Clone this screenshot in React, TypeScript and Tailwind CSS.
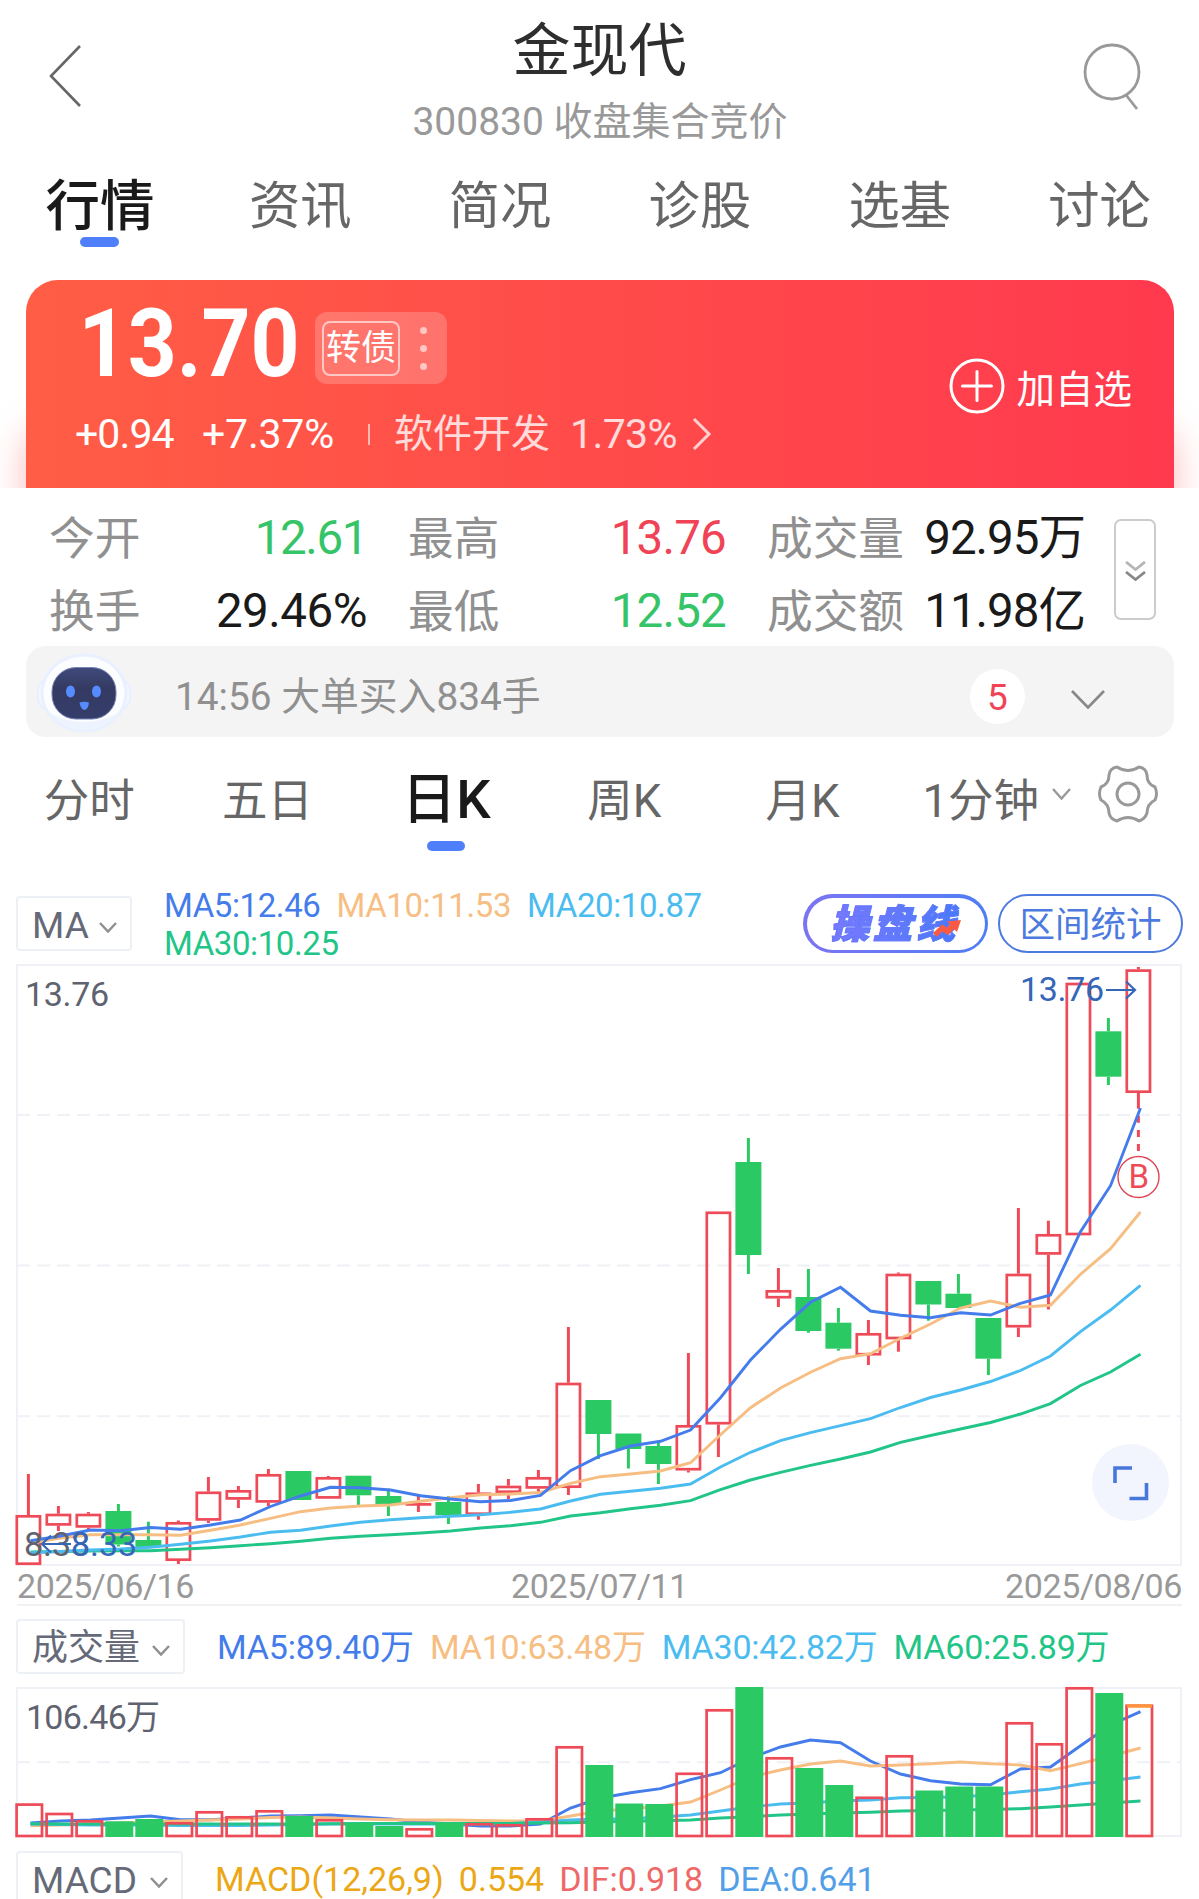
import { clsx } from "clsx";

type Tone = "up" | "down";

type Candle = {
  tone: Tone;
  top: number;
  bottom: number;
  high?: number;
  low?: number;
};

type Series = { color: string; points: number[] };

const UP = "#ee4a58";
const DOWN = "#2bc964";
const STEP = 30;

const tabs = ["行情", "资讯", "简况", "诊股", "选基", "讨论"];
const periods = ["分时", "五日", "日K", "周K", "月K", "1分钟"];

const stats = [
  { label: "今开", value: "12.61", className: "text-[#35c468] tracking-[-1.4px]" },
  { label: "最高", value: "13.76", className: "text-[#f04356] tracking-[-0.8px]" },
  { label: "成交量", value: "92.95万", className: "text-[#1a1a1a] tracking-[-1px]" },
  { label: "换手", value: "29.46%", className: "text-[#1a1a1a] tracking-[-0.5px]" },
  { label: "最低", value: "12.52", className: "text-[#35c468] tracking-[-0.8px]" },
  { label: "成交额", value: "11.98亿", className: "text-[#1a1a1a] tracking-[-1px]" },
];

const candles: Candle[] = [
  { tone: "up", top: 1515, bottom: 1565, high: 1474 },
  { tone: "up", top: 1513.7, bottom: 1525.7, high: 1506, low: 1531 },
  { tone: "up", top: 1513.7, bottom: 1527.7, high: 1512, low: 1530 },
  { tone: "down", top: 1511, bottom: 1544.5, high: 1504, low: 1546.5 },
  { tone: "down", top: 1540, bottom: 1547, high: 1521.7 },
  { tone: "up", top: 1522, bottom: 1561, high: 1520.5, low: 1564 },
  { tone: "up", top: 1491.5, bottom: 1520.7, high: 1477, low: 1523 },
  { tone: "up", top: 1490, bottom: 1499.7, high: 1486, low: 1508 },
  { tone: "up", top: 1474, bottom: 1502.7, high: 1469, low: 1506 },
  { tone: "down", top: 1471, bottom: 1500 },
  { tone: "up", top: 1477, bottom: 1498.7, high: 1476 },
  { tone: "down", top: 1475.7, bottom: 1495.3, low: 1505 },
  { tone: "down", top: 1496, bottom: 1504, high: 1488.7, low: 1516 },
  { tone: "up", top: 1503, bottom: 1505, high: 1496, low: 1512 },
  { tone: "down", top: 1502, bottom: 1515, high: 1496, low: 1524 },
  { tone: "up", top: 1492.5, bottom: 1515, high: 1484, low: 1519.7 },
  { tone: "up", top: 1485.7, bottom: 1493, high: 1479, low: 1499 },
  { tone: "up", top: 1477, bottom: 1488.7, high: 1470, low: 1493 },
  { tone: "up", top: 1382.7, bottom: 1488, high: 1327, low: 1495 },
  { tone: "down", top: 1400, bottom: 1434, low: 1459 },
  { tone: "down", top: 1433.5, bottom: 1449, low: 1468.5 },
  { tone: "down", top: 1446, bottom: 1464, high: 1441.7, low: 1484 },
  { tone: "up", top: 1425, bottom: 1470.5, high: 1353, low: 1472.5 },
  { tone: "up", top: 1211.5, bottom: 1424.5, low: 1457 },
  { tone: "down", top: 1162, bottom: 1255, high: 1138, low: 1274 },
  { tone: "up", top: 1290, bottom: 1298.5, high: 1268, low: 1307 },
  { tone: "down", top: 1297, bottom: 1331, high: 1269, low: 1332.7 },
  { tone: "down", top: 1322.7, bottom: 1348.7, high: 1308, low: 1350.7 },
  { tone: "up", top: 1333, bottom: 1355.5, high: 1320, low: 1365 },
  { tone: "up", top: 1273.7, bottom: 1339.3, high: 1272.5, low: 1351.7 },
  { tone: "down", top: 1281, bottom: 1304.5, low: 1320.7 },
  { tone: "down", top: 1293.7, bottom: 1308, high: 1274 },
  { tone: "down", top: 1318, bottom: 1358.7, low: 1375 },
  { tone: "up", top: 1273.7, bottom: 1327.5, high: 1208, low: 1337 },
  { tone: "up", top: 1234, bottom: 1254.7, high: 1220.7, low: 1309.5 },
  { tone: "up", top: 982.7, bottom: 1235.3 },
  { tone: "down", top: 1031.3, bottom: 1076.7, high: 1018, low: 1085 },
  { tone: "up", top: 969.3, bottom: 1093, high: 967, low: 1108.7 },
];

const priceSeries: Series[] = [
  {
    color: "#21c587",
    points: [
      1552, 1551.5, 1551, 1550.7, 1550.7, 1549.3, 1547.7, 1545.7, 1543.7, 1541.3, 1538.3, 1536.3, 1534.7, 1533, 1531, 1528, 1525.7, 1522.3, 1516,
      1512.7, 1508.7, 1505.3, 1500.7, 1489.7, 1480, 1472.3, 1465.3, 1459, 1452, 1442.3, 1435.5, 1429, 1422.5, 1414, 1403.6, 1385.5, 1372, 1354.3,
    ],
  },
  {
    color: "#4bbcf0",
    points: [
      1552.7, 1551.5, 1550, 1549, 1547.3, 1544.3, 1541, 1537, 1532.3, 1530.3, 1526, 1522.3, 1519.7, 1517.7, 1516.3, 1514.7, 1512.3, 1509, 1501,
      1494.3, 1491.3, 1488.3, 1484, 1467, 1452.3, 1440.7, 1432.7, 1425.7, 1418.7, 1407.5, 1397.5, 1390, 1381.5, 1370.5, 1356, 1331.7, 1310, 1285.3,
    ],
  },
  {
    color: "#f6be82",
    points: [
      1543, 1538, 1534.7, 1534.7, 1534.7, 1535.3, 1530.3, 1525, 1518.3, 1511.7, 1508, 1506, 1505, 1501.3, 1497.7, 1494.7, 1494, 1492.5, 1483.3,
      1476.7, 1474, 1471, 1462.7, 1434.7, 1407.7, 1388, 1372.3, 1358.7, 1353.7, 1338.3, 1324, 1308, 1301, 1307.3, 1305.3, 1274.3, 1248.7, 1212,
    ],
  },
  {
    color: "#447ceb",
    points: [
      1540.7, 1536, 1530, 1530.7, 1527.5, 1529.3, 1525, 1520, 1506.5, 1496, 1487.3, 1487.7, 1490, 1495.7, 1499, 1501.7, 1500.5, 1495.4, 1470.7,
      1455.7, 1446, 1441.3, 1430, 1397.7, 1360, 1329.3, 1302.3, 1287.3, 1311, 1315.2, 1317.7, 1312.7, 1315, 1303.3, 1295, 1231.7, 1185.7, 1108,
    ],
  },
];

const volumeTops = [
  1803.3, 1812.7, 1820, 1821.3, 1819, 1822, 1811, 1816, 1810, 1816, 1819, 1823, 1826, 1828, 1823, 1823, 1824, 1818, 1746, 1765, 1803.5, 1804,
  1772.5, 1709, 1687, 1757, 1768, 1785, 1796.5, 1755, 1790.5, 1786.5, 1786.5, 1722, 1743, 1687, 1693, 1704.5,
];

const volumeSeries: Series[] = [
  {
    color: "#447ceb",
    points: [
      1823, 1821, 1820, 1818, 1816, 1819.7, 1819.7, 1818, 1816, 1815.7, 1815, 1817, 1819, 1822, 1824, 1826, 1826, 1824, 1808, 1798, 1792.7, 1788.7,
      1779.7, 1772.7, 1758, 1747, 1740, 1742.7, 1761, 1774, 1780.7, 1784, 1784.7, 1769, 1767, 1745.7, 1725, 1711.7,
    ],
  },
  {
    color: "#f6be82",
    points: [
      1825.7, 1825, 1824, 1823, 1822, 1821, 1820, 1819, 1817.5, 1817, 1818, 1819, 1819.7, 1820, 1820, 1820.5, 1821, 1821, 1816, 1811, 1809, 1806,
      1802, 1790, 1777, 1770, 1764, 1761, 1766, 1765, 1763.7, 1762, 1763.7, 1765, 1770.7, 1763.7, 1756, 1748,
    ],
  },
  {
    color: "#4bbcf0",
    points: [
      1824, 1824.5, 1825, 1825, 1825, 1825.5, 1825.5, 1825.5, 1825, 1824.5, 1824, 1824, 1824, 1824, 1824, 1824, 1823.5, 1822, 1820, 1819, 1818.7,
      1817, 1815, 1811, 1807, 1804, 1802.7, 1801, 1800, 1797.7, 1797.5, 1796.7, 1795, 1791.7, 1789, 1784, 1780.7, 1777,
    ],
  },
  {
    color: "#21c587",
    points: [
      1823.7, 1824, 1824, 1824, 1824, 1824, 1824, 1824, 1824, 1824, 1823.7, 1823.5, 1823.5, 1823.5, 1823.5, 1823.5, 1823.5, 1823, 1822.7, 1822,
      1821.3, 1820.7, 1820, 1818, 1816.7, 1815, 1814, 1813, 1812.3, 1811, 1810.5, 1810, 1809.5, 1808.7, 1807, 1805, 1803, 1801,
    ],
  },
];

function Chevron({ className = "", width = 17, height = 10, stroke = 2.2 }: { className?: string; width?: number; height?: number; stroke?: number }) {
  return (
    <svg className={clsx("flex-none", className)} width={width} height={height} viewBox={`0 0 ${width} ${height}`} fill="none" stroke="currentColor" strokeWidth={stroke}>
      <path d={`M1 1L${width / 2} ${height - 1.5}L${width - 1} 1`} />
    </svg>
  );
}

function Header() {
  return (
    <header className="grid h-[160px] grid-cols-[1fr_auto_1fr] px-[48px]">
      <svg className="ml-[1px] mt-[45px]" width="34" height="62" viewBox="0 0 34 62" fill="none" stroke="#666" strokeWidth="2.6">
        <path d="M31 1L2 31L31 61" />
      </svg>
      <div className="flex flex-col items-center">
        <h1 className="mt-[16px] h-[70px] text-[58px] font-normal leading-[70px] text-[#2e2e2e]">金现代</h1>
        <p className="mt-[11px] h-[50px] pl-[1px] text-[39px] leading-[50px] text-[#999]">300830 收盘集合竞价</p>
      </div>
      <svg className="mr-[8px] mt-[42px] justify-self-end" width="60" height="70" viewBox="0 0 60 70" fill="none" stroke="#999" strokeWidth="2.8">
        <circle cx="29" cy="30" r="27" />
        <path d="M43 53L54 67" />
      </svg>
    </header>
  );
}

function MainTabs() {
  return (
    <nav className="grid h-[120px] grid-cols-6">
      {tabs.map((tab, index) => (
        <div key={tab} className="flex flex-col items-center">
          <span className={clsx("mt-[13px] h-[64px] leading-[66px]", index === 0 ? "text-[54.5px] font-medium text-[#1a1a1a]" : "pl-[1px] pt-[1px] text-[51.3px] text-[#666]")}>{tab}</span>
          {index === 0 && <i className="h-[10px] w-[39px] rounded-full bg-[#4f7ffa]" />}
        </div>
      ))}
    </nav>
  );
}

function QuoteCard() {
  return (
    <section className="h-[208px] overflow-hidden pl-[26px] pr-[25px]">
      <div className="flex h-[240px] justify-between rounded-t-[32px] bg-linear-to-r from-[#ff5d45] via-[#ff4b4a] to-[#ff394e] pl-[49px] pr-[42px] text-white shadow-[0_145px_36px_rgba(255,90,90,0.42)]">
        <div>
          <div className="flex h-[124px] items-center">
            <strong className="mt-[4px] block w-[240px] origin-left scale-x-[0.9] whitespace-nowrap pl-[4px] text-[95px] font-bold leading-[124px]">13.70</strong>
            <div className="mt-[12px] flex h-[72px] w-[132px] items-center rounded-[12px] bg-white/20 pl-[7px]">
              <span className="grid h-[55px] w-[78px] place-items-center rounded-[8px] border-2 border-white/60 pt-[1px] text-[35px] leading-none">转债</span>
              <span className="ml-[20px] flex flex-col gap-[11px]">
                <i className="size-[7px] rounded-full bg-white/60" />
                <i className="size-[7px] rounded-full bg-white/60" />
                <i className="size-[7px] rounded-full bg-white/60" />
              </span>
            </div>
          </div>
          <div className="mt-[1px] flex h-[58px] items-center text-[41px] leading-[58px]">
            <span className="w-[127px] tracking-[-0.9px]">+0.94</span>
            <span className="w-[166px] tracking-[-0.2px]">+7.37%</span>
            <i className="h-[21px] w-[2px] bg-white/60" />
            <span className="ml-[24px] w-[176px] text-[39px] text-white/80">软件开发</span>
            <span className="w-[122px] tracking-[-0.6px] text-white/80">1.73%</span>
            <svg width="20" height="34" viewBox="0 0 20 34" fill="none" stroke="#ffd0d2" strokeWidth="3">
              <path d="M2 2L17 17L2 32" />
            </svg>
          </div>
        </div>
        <button className="mt-[78px] flex h-[56px] items-center gap-[11px]" type="button">
          <svg width="56" height="56" viewBox="0 0 56 56" fill="none" stroke="white" strokeWidth="3">
            <circle cx="28" cy="28" r="26" />
            <path d="M13.500 28H42.500M28 13.500V42.500" strokeLinecap="round" />
          </svg>
          <span className="mt-[8px] text-[38.5px] leading-[56px]">加自选</span>
        </button>
      </div>
    </section>
  );
}

function Stats() {
  return (
    <section className="flex h-[158px] pl-[49px] pt-[13px]">
      <div className="grid h-[146px] grid-cols-[318px_318px_318px] grid-rows-2 gap-x-[41px]">
        {stats.map((item) => (
          <div key={item.label} className="flex h-[73px] items-center justify-between whitespace-nowrap">
            <span className="mt-[4px] text-[45.7px] leading-[73px] text-[#909090]">{item.label}</span>
            <span className={clsx("mt-[2px] text-[47.5px] leading-[73px]", item.className)}>{item.value}</span>
          </div>
        ))}
      </div>
      <button className="ml-[29px] mt-[18px] flex h-[101px] w-[42px] flex-col items-center justify-center rounded-[7px] border-[2.5px] border-[#ccc] pt-[2px]" type="button">
        <Chevron className="text-[#b5b5b5]" width={21} height={10} stroke={2.8} />
        <Chevron className="text-[#888]" width={21} height={10} stroke={2.8} />
      </button>
    </section>
  );
}

function RobotAvatar() {
  return (
    <svg className="mt-[7px] flex-none" width="98" height="84" viewBox="0 0 98 84">
      <defs>
        <linearGradient id="face" x1="0" y1="0" x2="0" y2="1">
          <stop offset="0" stopColor="#3f4a7c" />
          <stop offset="0.4" stopColor="#343a62" />
          <stop offset="1" stopColor="#353d6b" />
        </linearGradient>
      </defs>
      <rect x="3" y="26" width="92" height="30" rx="11" fill="#f3f7ff" stroke="#e6eeff" strokeWidth="1.500" />
      <ellipse cx="49" cy="40" rx="42" ry="38" fill="#fbfdff" stroke="#e9f0ff" strokeWidth="3" />
      <path d="M15 60Q49 78 83 60Q72 77 49 77Q26 77 15 60Z" fill="#edf3ff" />
      <rect x="17" y="14.500" width="64" height="51.500" rx="24" fill="url(#face)" stroke="#7884b8" strokeWidth="1" />
      <ellipse cx="35.500" cy="38.500" rx="4.500" ry="6" fill="#568cff" />
      <ellipse cx="61.500" cy="38.500" rx="4.500" ry="6" fill="#568cff" />
      <path d="M44.500 49.500Q49 48 54 49.500Q53 57 49.300 57Q45.500 56 44.500 49.500Z" fill="#568cff" />
    </svg>
  );
}

function AlertBar() {
  return (
    <section className="ml-[26px] mr-[25px] flex h-[91px] items-center rounded-[20px] bg-[#f4f4f4] pl-[9px]">
      <RobotAvatar />
      <span className="ml-[42px] mt-[11px] w-[795px] whitespace-nowrap text-[38.8px] leading-[56px] text-[#909090]">14:56 大单买入834手</span>
      <span className="mt-[9px] grid size-[55px] place-items-center rounded-full bg-white pt-[3px] text-[37px] leading-none text-[#f04356]">5</span>
      <Chevron className="ml-[46px] mt-[15px] text-[#888]" width={34} height={19} stroke={2.6} />
    </section>
  );
}

function PeriodTabs() {
  return (
    <nav className="flex h-[159px]">
      <div className="grid h-[120px] w-[1070px] grid-cols-6">
        {periods.map((period) => {
          const active = period === "日K";
          return (
            <div key={period} className="flex flex-col items-center">
              <span className={clsx("leading-[66px]", active ? "mt-[29px] h-[66px] pl-[1px] text-[54.5px] font-medium text-[#1a1a1a]" : "mt-[32px] h-[66px] text-[45.5px] text-[#666]")}>{period}</span>
              {active && <i className="mt-[9px] h-[10px] w-[38px] rounded-full bg-[#4f7ffa]" />}
            </div>
          );
        })}
      </div>
      <Chevron className="-ml-[18px] mt-[51px] text-[#999]" width={19} height={12} stroke={2.4} />
      <svg className="ml-[26px] mt-[27px]" width="62" height="60" viewBox="0 0 62 60" fill="none" stroke="#999" strokeWidth="3" strokeLinejoin="round">
        <path d="M20 3Q31 10 42 3Q49 4 50 11Q50 20 58 23Q61 30 58 36Q50 40 50 49Q48 55 42 57Q31 50 20 57Q13 55 12 49Q12 40 4 36Q1 30 4 23Q12 20 12 11Q13 4 20 3Z" />
        <circle cx="31" cy="30" r="11" />
      </svg>
    </nav>
  );
}

function Selector({ label, className }: { label: string; className: string }) {
  return (
    <button className={clsx("flex h-[55px] flex-none items-center justify-between rounded-[4px] border-2 border-[#edf0f5] pl-[14px] pr-[13px] text-[#666a78]", className)} type="button">
      <span className="mt-[3px] leading-none">{label}</span>
      <Chevron className="mt-[7px] text-[#909090]" width={18} height={11} stroke={2.5} />
    </button>
  );
}

function PriceToolbar() {
  return (
    <div className="flex h-[68px] pl-[16px]">
      <Selector label="MA" className="w-[116px] text-[37px]" />
      <div className="ml-[32px] mt-[-9px] w-[639px] text-[33px] leading-[38px] tracking-[-0.4px]">
        <div className="flex gap-[16px]">
          <span className="text-[#447ceb]">MA5:12.46</span>
          <span className="text-[#f6be82]">MA10:11.53</span>
          <span className="text-[#4bbcf0]">MA20:10.87</span>
        </div>
        <div className="text-[#21c587]">MA30:10.25</div>
      </div>
      <div className="mt-[-2px] h-[59px] w-[185px] flex-none rounded-full bg-linear-to-r from-[#7b74f2] to-[#4d7df6] p-[3.5px]">
        <div className="relative grid h-full place-items-center rounded-full bg-white">
          <span className="mt-[3px] bg-linear-to-r from-[#7a78ff] to-[#4579fa] bg-clip-text pr-[2px] text-[39px] font-black italic leading-[46px] tracking-[4px] text-transparent [-webkit-text-stroke:1px_#6279fb]">操盘线</span>
          <svg className="absolute bottom-[12px] right-[23px]" width="29" height="18" viewBox="0 0 29 18">
            <path d="M0 13L9 4.500L14 7.500L17 4.500L14 1.500L28 0L24 12L21 9L15 15L9 11.500L4 17Z" fill="#fb5a42" />
          </svg>
        </div>
      </div>
      <button className="ml-[10px] mt-[-2px] grid h-[59px] w-[185px] flex-none place-items-center rounded-full border-2 border-[#4d7ade] pt-[4px] text-[35.5px] leading-none text-[#4d7ade]" type="button">
        区间统计
      </button>
    </div>
  );
}

function Lines({ series }: { series: Series[] }) {
  return (
    <>
      {series.map((line, index) => (
        <polyline key={index} fill="none" stroke={line.color} strokeWidth="2.900" points={line.points.map((y, i) => `${30.5 + i * STEP},${y}`).join(" ")} />
      ))}
    </>
  );
}

function PriceChart() {
  return (
    <svg className="block" width="1199" height="604" viewBox="0 964 1199 604">
      <g fill="none" stroke="#eff1f6" strokeWidth="2">
        <path d="M17 965H1181V1565H17Z" />
        <path d="M17 1115H1181M17 1265.500H1181M17 1416.300H1181" strokeDasharray="13 7" />
      </g>
      {candles.map((c, i) => {
        const x = 28.4 + i * STEP;
        const color = c.tone === "up" ? UP : DOWN;
        return (
          <g key={i} stroke={color} strokeWidth="2.700">
            {c.high !== undefined && <path d={`M${x} ${c.high}V${c.top}`} strokeWidth="3" />}
            {c.low !== undefined && <path d={`M${x} ${c.bottom}V${c.low}`} strokeWidth="3" />}
            {c.tone === "up" ? (
              <rect x={x - 11.6} y={c.top + 1.3} width="23.200" height={Math.max(c.bottom - c.top - 2.6, 0.1)} fill="none" />
            ) : (
              <rect x={x - 13} y={c.top} width="26" height={c.bottom - c.top} fill={color} stroke="none" />
            )}
          </g>
        );
      })}
      <path d="M1138.400 1115.700V1151" stroke={UP} strokeWidth="3" strokeDasharray="7 7.200" />
      <Lines series={priceSeries} />
      <circle cx="1138.500" cy="1177" r="20.500" fill="white" stroke="#e04557" strokeWidth="1.400" />
      <text x="1138.700" y="1187.500" textAnchor="middle" fontSize="33" fill={UP}>B</text>
      <g fontSize="34">
        <text x="25" y="1006" fill="#5f6370" textLength="84">13.76</text>
        <text x="1020" y="1001" fill="#3566b8" textLength="84">13.76</text>
        <text x="24" y="1556" fill="#5f6370" textLength="66">8.33</text>
        <text x="71" y="1556" fill="#3566b8" textLength="66">8.33</text>
      </g>
      <g fill="none" stroke="#3566b8" strokeWidth="2.200">
        <path d="M1106 990H1135M1126 981.500L1135 990L1126 998.500" />
        <path d="M71 1544H42M51 1535.500L42 1544L51 1552.500" />
      </g>
      <circle cx="1130.500" cy="1482.500" r="38.500" fill="#f2f5fe" />
      <path d="M1115 1483V1468H1132M1146.500 1483V1498.500H1129.500" fill="none" stroke="#4877dc" strokeWidth="3.600" />
    </svg>
  );
}

function VolumeChart() {
  return (
    <svg className="block" width="1199" height="152" viewBox="0 1686 1199 152">
      <g fill="none" stroke="#eff1f6" strokeWidth="2">
        <path d="M17 1688H1181V1836H17Z" />
        <path d="M17 1762.300H1181" strokeDasharray="13 7" />
      </g>
      <Lines series={volumeSeries} />
      {volumeTops.map((top, i) => {
        const x = 29.3 + i * STEP;
        return candles[i].tone === "up" ? (
          <rect key={i} x={x - 12.7} y={top + 1.3} width="25.400" height={1836 - top - 1.3} fill="none" stroke={UP} strokeWidth="2.700" />
        ) : (
          <rect key={i} x={x - 14} y={top} width="28" height={1837 - top} fill={DOWN} />
        );
      })}
      <path d="M1127 1706H1152" stroke="#ff9439" strokeWidth="3.400" />
      <text x="26" y="1728.500" fontSize="34" fill="#5f6370" textLength="134">106.46万</text>
    </svg>
  );
}

export default function App() {
  return (
    <main className="h-[1899px] w-[1199px] overflow-hidden bg-white font-['Roboto','Noto_Sans_CJK_SC',sans-serif]">
      <Header />
      <MainTabs />
      <QuoteCard />
      <Stats />
      <AlertBar />
      <PeriodTabs />
      <PriceToolbar />
      <PriceChart />
      <div className="mx-[17px] -mt-[1px] flex h-[39px] items-center justify-between border-b-2 border-[#f1f2f4] text-[34px] leading-none tracking-[-0.4px] text-[#999]">
        <span>2025/06/16</span>
        <span>2025/07/11</span>
        <span>2025/08/06</span>
      </div>
      <div className="flex h-[80px] items-start pl-[16px] pt-[13px]">
        <Selector label="成交量" className="w-[169px] text-[36px]" />
        <div className="ml-[32px] flex gap-[16px] whitespace-nowrap text-[34px] leading-[57px] tracking-[-0.2px]">
          <span className="text-[#447ceb]">MA5:89.40万</span>
          <span className="text-[#f6be82]">MA10:63.48万</span>
          <span className="text-[#4bbcf0]">MA30:42.82万</span>
          <span className="text-[#21c587]">MA60:25.89万</span>
        </div>
      </div>
      <VolumeChart />
      <div className="flex items-start pl-[16px] pt-[13px]">
        <Selector label="MACD" className="w-[167px] text-[37px]" />
        <div className="ml-[32px] flex gap-[15px] whitespace-nowrap text-[34px] leading-[56px]">
          <span className="text-[#eba715]">MACD(12,26,9)</span>
          <span className="text-[#eba715]">0.554</span>
          <span className="text-[#ee6868]">DIF:0.918</span>
          <span className="text-[#529fe8]">DEA:0.641</span>
        </div>
      </div>
    </main>
  );
}
